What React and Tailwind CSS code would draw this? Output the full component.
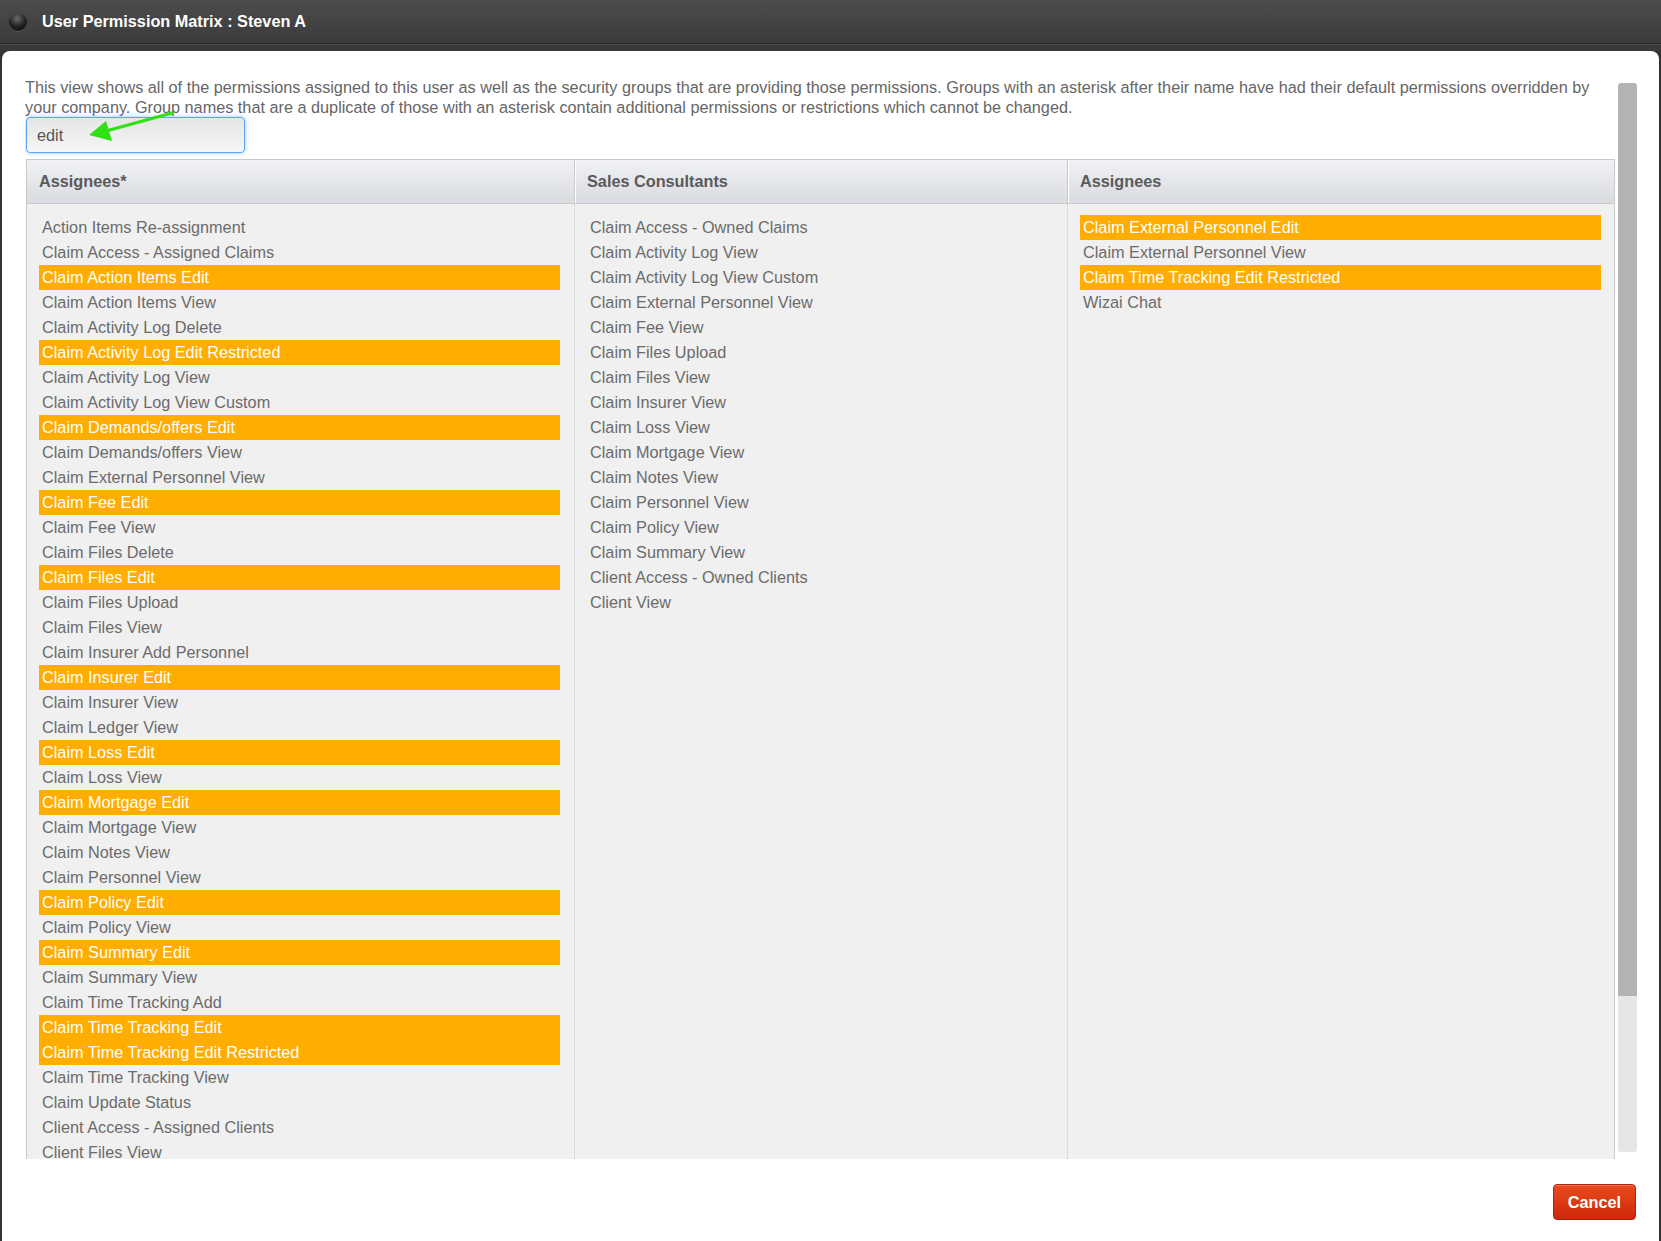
import React from 'react';

const assignees = [
  ['Action Items Re-assignment'],
  ['Claim Access - Assigned Claims'],
  ['Claim Action Items Edit', true],
  ['Claim Action Items View'],
  ['Claim Activity Log Delete'],
  ['Claim Activity Log Edit Restricted', true],
  ['Claim Activity Log View'],
  ['Claim Activity Log View Custom'],
  ['Claim Demands/offers Edit', true],
  ['Claim Demands/offers View'],
  ['Claim External Personnel View'],
  ['Claim Fee Edit', true],
  ['Claim Fee View'],
  ['Claim Files Delete'],
  ['Claim Files Edit', true],
  ['Claim Files Upload'],
  ['Claim Files View'],
  ['Claim Insurer Add Personnel'],
  ['Claim Insurer Edit', true],
  ['Claim Insurer View'],
  ['Claim Ledger View'],
  ['Claim Loss Edit', true],
  ['Claim Loss View'],
  ['Claim Mortgage Edit', true],
  ['Claim Mortgage View'],
  ['Claim Notes View'],
  ['Claim Personnel View'],
  ['Claim Policy Edit', true],
  ['Claim Policy View'],
  ['Claim Summary Edit', true],
  ['Claim Summary View'],
  ['Claim Time Tracking Add'],
  ['Claim Time Tracking Edit', true],
  ['Claim Time Tracking Edit Restricted', true],
  ['Claim Time Tracking View'],
  ['Claim Update Status'],
  ['Client Access - Assigned Clients'],
  ['Client Files View'],
];

const salesConsultants = [
  ['Claim Access - Owned Claims'],
  ['Claim Activity Log View'],
  ['Claim Activity Log View Custom'],
  ['Claim External Personnel View'],
  ['Claim Fee View'],
  ['Claim Files Upload'],
  ['Claim Files View'],
  ['Claim Insurer View'],
  ['Claim Loss View'],
  ['Claim Mortgage View'],
  ['Claim Notes View'],
  ['Claim Personnel View'],
  ['Claim Policy View'],
  ['Claim Summary View'],
  ['Client Access - Owned Clients'],
  ['Client View'],
];

const assigneesPlain = [
  ['Claim External Personnel Edit', true],
  ['Claim External Personnel View'],
  ['Claim Time Tracking Edit Restricted', true],
  ['Wizai Chat'],
];

const columns = [
  { title: 'Assignees*', items: assignees, mr: 'mr-[14px]' },
  { title: 'Sales Consultants', items: salesConsultants, mr: 'mr-[13px]' },
  { title: 'Assignees', items: assigneesPlain, mr: 'mr-[13px]' },
];

const PermissionRow = ({ label, hit }) => (
  <div
    className={`h-[25px] leading-[25px] pl-[3px] ml-[12px] whitespace-nowrap ${
      hit ? 'bg-[#ffad00] text-white' : 'text-[#6b6b6b]'
    }`}
  >
    {label}
  </div>
);

const App = () => {
  return (
    <div className="w-[1661px] h-[1241px] flex flex-col bg-[#333] font-['Liberation_Sans',Arial,sans-serif] overflow-hidden">
      {/* Title bar */}
      <div className="h-[44px] shrink-0 flex items-center bg-gradient-to-b from-[#4c4c4c] to-[#3b3b3b] border-b border-[#2a2a2a]">
        <div className="ml-[9px] w-[18px] h-[18px] rounded-full bg-[radial-gradient(circle_at_45%_30%,#6a6a6a_0%,#1e1e1e_55%,#0e0e0e_100%)] shadow-[0_1px_0_rgba(255,255,255,0.12)]"></div>
        <span className="ml-[15px] text-[16.25px] font-bold text-white">User Permission Matrix : Steven A</span>
      </div>
      <div className="h-[7px] shrink-0 bg-[#393939] border-t border-[#4a4a4a]"></div>

      {/* Modal body */}
      <div className="flex-1 mx-[2px] bg-white rounded-t-[8px] pt-[26px] pl-[23px] flex flex-col">
        <div className="flex h-[1082px]">
          <div className="w-[1591px] overflow-hidden">
            <p className="text-[16.25px] leading-[20px] text-[#666] whitespace-nowrap">
              This view shows all of the permissions assigned to this user as well as the security groups that are providing those permissions. Groups with an asterisk after their name have had their default permissions overridden by
              <br />
              your company. Group names that are a duplicate of those with an asterisk contain additional permissions or restrictions which cannot be changed.
            </p>

            <div className="relative ml-[1px] w-[219px]">
              <input
                readOnly
                value="edit"
                className="w-[219px] h-[36px] rounded-[4px] border border-[#5aa6f2] bg-gradient-to-b from-[#e6e6e6] to-[#f6f6f6] px-[10px] text-[16.25px] text-[#555] outline-none shadow-[0_0_4px_rgba(80,160,240,0.6)]"
              />
              <svg className="absolute left-0 top-[-10px] pointer-events-none" width="200" height="40" viewBox="0 0 200 40">
                <line x1="146" y1="6" x2="80" y2="24" stroke="#2fe012" strokeWidth="3.2" strokeLinecap="round" />
                <polygon points="63,28 86,34 80,14" fill="#2fe012" />
              </svg>
            </div>

            {/* Matrix table */}
            <div className="mt-[6px] ml-[1px] w-[1589px] border-l border-r border-t border-[#c9c9c9]">
              <div className="grid grid-cols-[547px_493px_547px] h-[44px] bg-gradient-to-b from-[#f1f2f5] to-[#d8dbe0] border-b border-[#c9c9c9]">
                {columns.map((col, i) => (
                  <div
                    key={col.title + i}
                    className={`flex items-center pl-[12px] text-[16.25px] font-bold text-[#5a5a5a] ${
                      i > 0 ? 'border-l border-[#c9c9c9] shadow-[inset_1px_0_0_#ffffff]' : ''
                    }`}
                  >
                    {col.title}
                  </div>
                ))}
              </div>
              <div className="grid grid-cols-[547px_493px_547px] bg-[#f0f0f0] text-[16.25px]">
                {columns.map((col, i) => (
                  <div
                    key={col.title + 'b' + i}
                    className={`pt-[11px] ${i > 0 ? 'border-l border-dotted border-[#c4c4c4]' : ''}`}
                  >
                    {col.items.map(([label, hit], j) => (
                      <div key={j} className={col.mr}>
                        <PermissionRow label={label} hit={hit} />
                      </div>
                    ))}
                  </div>
                ))}
              </div>
            </div>
          </div>

          {/* Scrollbar */}
          <div className="ml-[2px] mt-[6px] w-[19px] h-[1069px] flex flex-col">
            <div className="h-[913px] bg-[#b3b3b3] rounded-t-[3px]"></div>
            <div className="flex-1 bg-[#e6e6e6] rounded-b-[3px]"></div>
          </div>
        </div>

        {/* Footer */}
        <div className="flex justify-end pr-[23px] pt-[25px]">
          <button className="w-[83px] h-[36px] rounded-[4px] border border-[#a9230a] bg-gradient-to-b from-[#ea4a1d] to-[#cc270a] text-white text-[16.25px] font-bold shadow-[inset_0_1px_0_rgba(255,255,255,0.25)]">
            Cancel
          </button>
        </div>
      </div>
    </div>
  );
};

export default App;
